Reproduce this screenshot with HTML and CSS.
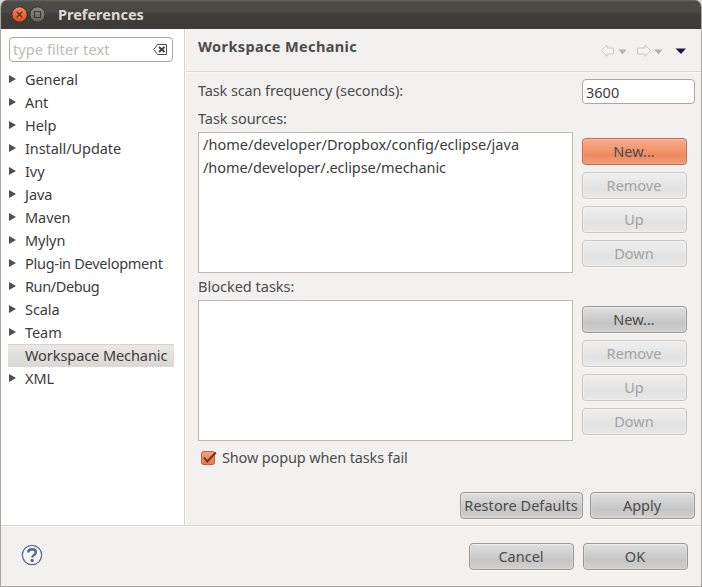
FILE: index.html
```html
<!DOCTYPE html>
<html lang="en">
<head>
<meta charset="utf-8">
<title>Preferences</title>
<link rel="stylesheet" href="styles.css">
</head>
<body>
<div class="window">
  <header class="titlebar">
    <svg class="wm" width="36" height="18" viewBox="0 0 36 18">
      <defs>
        <linearGradient id="wc" x2="0" y2="1"><stop stop-color="#f68b64"/><stop offset="1" stop-color="#df4a16"/></linearGradient>
        <linearGradient id="wg" x2="0" y2="1"><stop stop-color="#8c8b83"/><stop offset="1" stop-color="#63625b"/></linearGradient>
      </defs>
      <circle cx="8.500" cy="8.500" r="7.700" fill="url(#wc)" stroke="#302d29"/>
      <path d="M5.700 5.700l5.600 5.600M11.300 5.700l-5.600 5.600" stroke="#4c2414" stroke-width="1.200"/>
      <circle cx="26.500" cy="8.500" r="7.700" fill="url(#wg)" stroke="#302f2b"/>
      <path d="M23.500 5.500h6v6h-6z" fill="none" stroke="#3b3a35" stroke-width="1.200"/>
    </svg>
    <h1 class="title">Preferences</h1>
  </header>
  <div class="body">
    <nav class="sidebar">
      <div class="filter"><span>type filter text</span>
        <svg width="15" height="11" viewBox="0 0 15 11"><path d="M4.500.500h9v10h-9L.800 5.500z" fill="#fff" stroke="#4b4b4b"/><path d="M6 3l5.500 5M11.500 3L6 8" stroke="#444" stroke-width="2"/></svg>
      </div>
      <ul class="tree">
        <li class="parent">General</li>
        <li class="parent">Ant</li>
        <li class="parent">Help</li>
        <li class="parent">Install/Update</li>
        <li class="parent">Ivy</li>
        <li class="parent">Java</li>
        <li class="parent">Maven</li>
        <li class="parent">Mylyn</li>
        <li class="parent plugin">Plug-in Development</li>
        <li class="parent">Run/Debug</li>
        <li class="parent">Scala</li>
        <li class="parent">Team</li>
        <li class="selected">Workspace Mechanic</li>
        <li class="parent">XML</li>
      </ul>
    </nav>
    <main class="page">
      <div class="page-head">
        <h2>Workspace Mechanic</h2>
        <svg width="87" height="14" viewBox="0 0 87 14">
          <g fill="#f5f4f2" stroke="#c9c8c5"><path d="M1.500 6.500L7 1v3h6.500v6H7v2.500z"/><path d="M50.500 6.500L45 1v3h-7.500v6H45v2.500z"/></g>
          <path d="M18.500 5.500h8l-4 5zM54.500 5.500h8l-4 5z" fill="#b5b4b0"/>
          <path d="M75.500 4.500h10.500l-5 5.500z" fill="#1c1740"/>
        </svg>
      </div>
      <div class="form">
        <div class="freq"><label for="f">Task scan frequency (seconds):</label><input id="f" class="field" value="3600"></div>
        <p class="caption">Task sources:</p>
        <section class="group">
          <div class="list"><div class="wide">/home/developer/Dropbox/config/eclipse/java</div><div class="path">/home/developer/.eclipse/mechanic</div></div>
          <div class="stack"><button class="btn hot">New...</button><button class="btn" disabled>Remove</button><button class="btn" disabled>Up</button><button class="btn" disabled>Down</button></div>
        </section>
        <p class="caption second">Blocked tasks:</p>
        <section class="group">
          <div class="list"></div>
          <div class="stack"><button class="btn">New...</button><button class="btn" disabled>Remove</button><button class="btn" disabled>Up</button><button class="btn" disabled>Down</button></div>
        </section>
        <div class="check">
          <svg width="17" height="16" viewBox="0 0 17 16"><defs><linearGradient id="ck" x2="0" y2="1"><stop stop-color="#f9a079"/><stop offset="1" stop-color="#ee7543"/></linearGradient></defs><rect x="1.500" y="1.500" width="13" height="13" rx="2" fill="url(#ck)" stroke="#b96543"/><path d="M4 7.500l3.200 4L15.800 2.500" fill="none" stroke="#633423" stroke-width="2"/></svg>
          <span>Show popup when tasks fail</span>
        </div>
        <div class="page-actions"><button class="btn restore">Restore Defaults</button><button class="btn">Apply</button></div>
      </div>
    </main>
  </div>
  <footer class="footer">
    <svg width="22" height="22" viewBox="0 0 22 22"><circle cx="11" cy="11" r="9.700" fill="#f5f5f6" stroke="#5c6e8b" stroke-width="1.300"/><path d="M7.300 8.500c0-4.300 7.500-4.300 7.500 0 0 2.500-3.300 2.300-3.500 5" fill="none" stroke="#586b8c" stroke-width="2.500"/><circle cx="11.200" cy="16.500" r="1.700" fill="#586b8c"/></svg>
    <div class="footer-actions"><button class="btn">Cancel</button><button class="btn">OK</button></div>
  </footer>
</div>
</body>
</html>
```
FILE: styles.css
```css
* { box-sizing: border-box; }
body { margin: 0; background: #d9d8d6; font: 14.5px/23px "Noto Sans", sans-serif; color: #4c4c4c; }
h1, h2, p, ul { margin: 0; padding: 0; }
button, input { font: inherit; color: inherit; }
.window { width: 702px; height: 587px; display: flex; flex-direction: column; background: #f2f1f0; border: solid #aaa6a1; border-width: 0 1px 1px; border-radius: 7px 7px 0 0; overflow: hidden; white-space: nowrap; }
.titlebar { height: 29px; margin: 0 -1px; flex: none; display: flex; background: linear-gradient(#65645e 0, #4b4a45 2px, #494843 12px, #3f3e39 14px, #3c3b37 100%); }
.wm { margin: 6px 0 0 11px; }
.title { margin: 3px 0 0 11px; font-size: 14.5px; font-weight: 700; color: #dfdbd2; }
.body { height: 496px; display: flex; }
.sidebar { width: 184px; background: #fff; border-right: 1px solid #d8d6d3; padding: 8px 0 0 8px; }
.filter { width: 164px; height: 25px; display: flex; align-items: center; justify-content: space-between; padding: 0 4px 0 3px; border: 1px solid #aaa6a1; border-radius: 4px; color: #bdbab6; letter-spacing: .08px; }
.filter span { margin-top: -1px; }
.tree { margin: 6px 0 0 -1px; list-style: none; width: 166px; color: #3c3c3c; letter-spacing: -.07px; }
.tree li { height: 23px; padding-left: 17px; position: relative; }
.tree .plugin { letter-spacing: -.28px; }
.parent::before { content: ""; position: absolute; left: 1px; top: 7px; width: 7px; height: 8px; background: #505050; clip-path: polygon(0 0, 100% 50%, 0 100%); }
.tree .parent:nth-child(10) { letter-spacing: -.4px; }
.tree .selected { background: linear-gradient(#e8e7e5, #d9d8d5); border-top: 1px solid #d5d4d1; line-height: 21px; }
.page { flex: 1; border-left: 1px solid #fafaf9; }
.page-head { height: 43px; display: flex; justify-content: space-between; padding: 6px 14px 0 12px; border-bottom: 1px solid #d9d8d5; box-shadow: 0 1px #faf9f8; }
.page-head h2 { font-size: 14.5px; letter-spacing: .37px; }
.page-head svg { margin-top: 9px; }
.form { padding: 7px 6px 0 12px; }
.freq { display: flex; justify-content: space-between; align-items: flex-start; height: 26px; letter-spacing: -.12px; }
.field { width: 113px; height: 25px; padding: 0 3px; border: 1px solid #aaa6a1; border-radius: 4px; background: #fff; color: #3c3c3c; }
.caption { height: 23px; margin: 3px 0 1px; line-height: 21px; letter-spacing: -.08px; }
.caption.second { letter-spacing: 0; }
.group { display: flex; gap: 9px; height: 141px; }
.list { width: 375px; border: 1px solid #bcb9b5; background: #fff; padding: 0 4px; color: #3c3c3c; }
.path { letter-spacing: -.06px; }
.wide { letter-spacing: .02px; }
.stack { display: flex; flex-direction: column; gap: 7px; padding-top: 6px; }
.btn { width: 105px; height: 27px; padding: 0 1px 2px 0; line-height: 22px; border: 1px solid #9b9998; border-radius: 4px; background: linear-gradient(#e0e0e0, #c5c5c5 65%, #d0d0d0); box-shadow: inset 0 1px #ececec, inset 0 0 2px #eee, 0 1px #fafafa; }
.btn:disabled { color: #a3a3a3; border-color: #c8c7c6; background: linear-gradient(#efefef, #e2e2e2 65%, #e8e8e8); box-shadow: inset 0 0 2px #fff, 0 1px #f8f8f8; }
.hot { border-color: #b9745a; background: linear-gradient(#f9ad8d, #ed895f 65%, #f29c77); box-shadow: inset 0 1px #fab99d, inset 0 0 2px #f9b394, 0 0 1px #dfa28a; }
.check { display: flex; align-items: center; gap: 5px; height: 24px; margin: 5px 0 0 2px; letter-spacing: -.15px; }
.check span { margin-top: -2px; }
.page-actions { display: flex; justify-content: flex-end; gap: 7px; margin-top: 22px; }
.restore { width: 123px; letter-spacing: .05px; }
.footer { flex: 1; display: flex; justify-content: space-between; align-items: flex-start; border-top: 1px solid #d8d6d3; padding: 17px 13px 0 20px; box-shadow: inset 0 1px #faf9f8; }
.footer svg { margin-top: 1px; }
.footer-actions { display: flex; gap: 9px; }
```
